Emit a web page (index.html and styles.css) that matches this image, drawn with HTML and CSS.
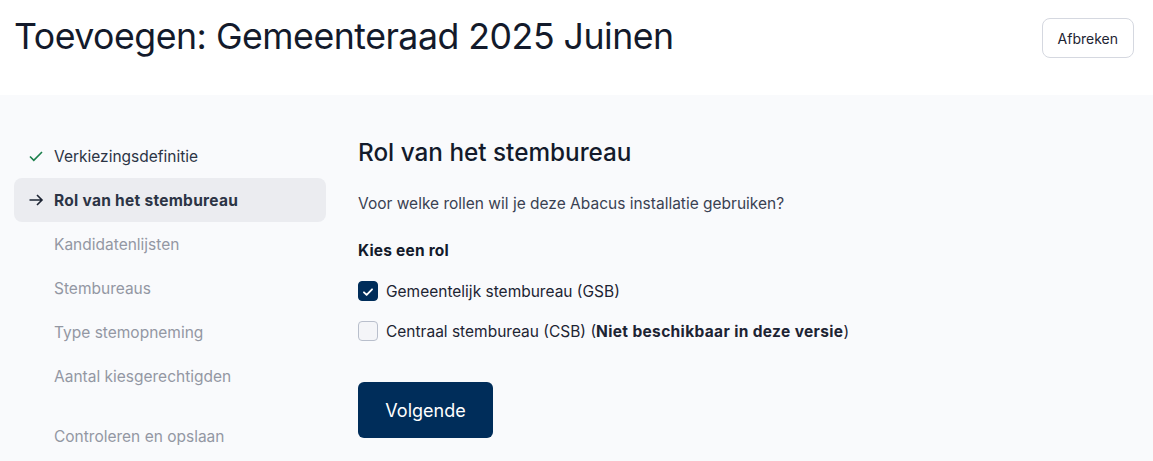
FILE: index.html
```html
<!DOCTYPE html>
<html lang="nl">
<head>
<meta charset="utf-8">
<link rel="stylesheet" href="styles.css">
</head>
<body>
<header class="top">
  <h1 class="title">Toevoegen: Gemeenteraad 2025 Juinen</h1>
  <button class="btn-secondary">Afbreken</button>
</header>
<main class="page">
  <nav class="steps">
    <div class="step done">
      <svg class="ic" viewBox="0 0 16 16" width="16" height="16"><path d="M2 8.5l3.8 3.8L14 4" fill="none" stroke="#1a7f4b" stroke-width="1.6"/></svg>
      <span>Verkiezingsdefinitie</span>
    </div>
    <div class="step active">
      <svg class="ic" viewBox="0 0 16 16" width="16" height="16"><path d="M1.5 8h12.5M9 3l5 5-5 5" fill="none" stroke="#1d2433" stroke-width="1.6"/></svg>
      <span>Rol van het stembureau</span>
    </div>
    <div class="step todo"><span class="ic"></span><span>Kandidatenlijsten</span></div>
    <div class="step todo"><span class="ic"></span><span>Stembureaus</span></div>
    <div class="step todo"><span class="ic"></span><span>Type stemopneming</span></div>
    <div class="step todo"><span class="ic"></span><span>Aantal kiesgerechtigden</span></div>
    <div class="step todo last"><span class="ic"></span><span>Controleren en opslaan</span></div>
  </nav>
  <section class="content">
    <h2 class="h2">Rol van het stembureau</h2>
    <p class="lead">Voor welke rollen wil je deze Abacus installatie gebruiken?</p>
    <div class="legend">Kies een rol</div>
    <label class="check">
      <span class="box checked"><svg viewBox="0 0 20 20" width="20" height="20"><path d="M5.5 10.3l3 3 6-6.3" fill="none" stroke="#fff" stroke-width="2" stroke-linecap="round" stroke-linejoin="round"/></svg></span>
      <span>Gemeentelijk stembureau (GSB)</span>
    </label>
    <label class="check">
      <span class="box"></span>
      <span>Centraal stembureau (CSB) (<b class="strong">Niet beschikbaar in deze versie</b>)</span>
    </label>
    <button class="btn-primary">Volgende</button>
  </section>
</main>
</body>
</html>
```
FILE: styles.css
```css
* { box-sizing: border-box; }
html, body { margin: 0; padding: 0; }
body {
  font-family: Inter, "Noto Sans", sans-serif;
  color: #1d2433;
  background: #f9fafc;
  height: 461px;
  overflow: hidden;
}
.top {
  background: #fff;
  height: 95px;
  display: flex;
  align-items: flex-start;
  justify-content: space-between;
  padding: 15px 19px 0 14px;
}
.title {
  margin: 0;
  font-family: Inter, sans-serif;
  font-weight: 400;
  font-size: 35.7px;
  letter-spacing: -0.5px;
  line-height: 42px;
  color: #131a2b;
}
.btn-secondary {
  font-family: Inter, sans-serif;
  font-size: 14px;
  color: #1d2433;
  background: #fff;
  border: 1px solid #d5d8e0;
  border-radius: 8px;
  height: 40px;
  padding: 0 15px;
  margin-top: 3px;
}
.page {
  display: flex;
  padding: 39px 0 0 14px;
}
.steps {
  width: 312px;
  display: flex;
  flex-direction: column;
}
.step {
  height: 44px;
  display: flex;
  align-items: center;
  gap: 10px;
  padding-left: 14px;
  font-size: 15.5px;
  border-radius: 8px;
}
.step .ic { width: 16px; height: 16px; flex: none; }
.step.done { color: #2c3445; }
.step.active { background: #ebecf0; font-weight: 700; color: #2c3445; letter-spacing: 0.28px; }
.step.todo { color: #9397a3; }
.step.last { margin-top: 16px; }
.content {
  padding-left: 32px;
  padding-top: 3px;
  display: flex;
  flex-direction: column;
  align-items: flex-start;
}
.h2 {
  margin: 0;
  font-size: 24.3px;
  font-weight: 500;
  line-height: 30px;
  color: #131a2b;
}
.lead {
  margin: 25px 0 0;
  font-size: 15.5px;
  line-height: 24px;
  color: #3a4152;
}
.legend {
  margin-top: 23px;
  font-weight: 700;
  font-size: 15.5px;
  line-height: 24px;
  color: #131a2b;
  letter-spacing: 0.2px;
}
.check {
  display: flex;
  align-items: center;
  gap: 8px;
  font-size: 15.5px;
  color: #1d2433;
  height: 40px;
}
.check:first-of-type { margin-top: 8px; }
.strong { letter-spacing: 0.35px; }
.box {
  width: 20px; height: 20px;
  border: 1px solid #b9bfcc;
  border-radius: 4px;
  background: #f4f5f8;
  display: flex;
}
.box.checked { background: #002d5a; border-color: #002d5a; }
.btn-primary {
  margin-top: 31px;
  width: 135px;
  height: 56px;
  background: #002d5a;
  color: #fff;
  border: none;
  border-radius: 6px;
  font-family: Inter, sans-serif;
  font-size: 18px;
}
```
